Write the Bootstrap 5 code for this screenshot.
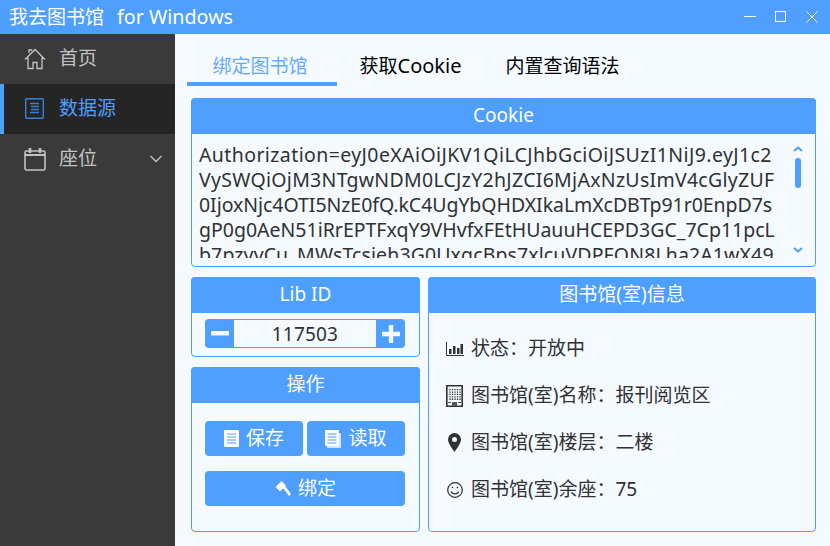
<!DOCTYPE html>
<html lang="zh-CN">
  <head>
    <meta charset="UTF-8" />
    <meta name="viewport" content="width=device-width, initial-scale=1.0" />
    <title>我去图书馆 for Windows</title>
    <link href="https://cdn.jsdelivr.net/npm/bootstrap@5.3.0/dist/css/bootstrap.min.css" rel="stylesheet" />
    <style>
      html, body { height: 100%; overflow: hidden; }
      body {
        background: #f5faff;
        color: #303133;
        font-family: "Noto Sans", "Noto Sans CJK SC", sans-serif;
        font-size: 19px;
      }
      .app-title {
        height: 34px;
        background: #4e9fff;
        color: #fff;
        padding-left: 9px;
        padding-right: 12px;
        line-height: 33px;
      }
      .app-title .win-btns { gap: 19px; }
      .title-en { font-size: 19.700px; margin-left: 13px; }
      .latin-big { font-size: 20px; }
      .app-body { height: 512px; }
      .side {
        width: 175px;
        background: #3a3a3a;
        color: #c3c3c3;
      }
      .side-item {
        height: 50px;
        padding-left: 24px;
        padding-bottom: 1px;
        gap: 13px;
        border-left: 0 solid #4e9fff;
      }
      .side-item.active-item {
        background: #252525;
        color: #4e9fff;
        border-left-width: 4px;
        padding-left: 21px;
        gap: 15px;
      }
      .side-item .chev { margin-left: auto; margin-right: 12px; }
      .main-pane { padding: 0 14px 14px 16px; min-width: 0; }
      .tabs-row { height: 64px; margin-left: -4px; padding-top: 14px; }
      .tab-item {
        height: 38px;
        line-height: 36px;
        padding: 0 21.500px 0 22.500px;
        color: #000;
        text-decoration: none;
        text-align: center;
      }
      .tab-item.on {
        min-width: 150px;
        padding-right: 25px;
        padding-left: 21px;
        color: #66abff;
        border-bottom: 4px solid #4e9fff;
      }
      .blue-card {
        background: #f5faff;
        border: 1px solid #4e9fff;
        border-radius: 4px;
        color: #303133;
      }
      .blue-card .card-header {
        height: 36px;
        line-height: 34px;
        padding: 0;
        margin: -1px -1px 0;
        background: #4e9fff;
        border: 0;
        border-radius: 4px 4px 0 0;
        color: #fff;
        text-align: center;
      }
      .cookie-box { height: 169px; }
      .cookie-text {
        height: 124px;
        overflow: hidden;
        padding: 8px 0 0 7px;
        line-height: 25px;
        white-space: nowrap;
        font-size: 19.500px;
        flex: 1;
        min-width: 0;
      }
      .ck-a { letter-spacing: .4px; }
      .ck-b { letter-spacing: .29px; }
      .ck-c { letter-spacing: -.05px; }
      .ck-d { letter-spacing: 0; }
      .ck-e { letter-spacing: .12px; }
      .fake-scroll {
        width: 34px;
        height: 131px;
        padding: 12px 0 12px;
        color: #4e9fff;
      }
      .fake-thumb {
        width: 6px;
        height: 30px;
        margin-top: 6px;
        background: #4e9fff;
        border-radius: 3px;
      }
      .lower-row { margin-top: 10px; gap: 8px; height: 255px; }
      .left-col { width: 229px; gap: 10px; }
      .lib-box { height: 80px; }
      .op-box { flex: 1; }
      .num-box { margin: 6px 14px 0 13px; height: 29px; }
      .num-box .btn {
        width: 29px;
        padding: 0;
        background: #4e9fff;
        border: 0;
        border-radius: 4px 0 0 4px;
      }
      .num-box .btn:last-child { border-radius: 0 4px 4px 0; }
      .num-box .form-control {
        height: 29px;
        padding: 0;
        background: #f5faff;
        border: 1px solid #4e9fff;
        border-width: 1px 0;
        border-radius: 0;
        color: #303133;
        font: inherit;
        letter-spacing: .2px;
        text-align: center;
        min-width: 0;
      }
      .op-body { padding: 18px 14px 0 13px; }
      .op-btn {
        height: 35px;
        padding: 0;
        background: #4e9fff;
        border: 0;
        border-radius: 4px;
        color: #fff;
        font-size: 19px;
        gap: 7px;
      }
      .op-half { width: 98px; }
      .op-wide { margin-top: 15px; }
      .info-body { padding-top: 12px; padding-left: 16px; }
      .info-line { height: 47px; gap: 7px; }
      .info-line .ico-slot { width: 19px; }
    </style>
  </head>
  <body>
    <div class="app-title d-flex align-items-center">
      <span>我去图书馆<span class="title-en">for Windows</span></span>
      <div class="win-btns d-flex align-items-center ms-auto">
        <svg width="12" height="12" viewBox="0 0 12 12"><path d="M0 5.500H12" stroke="#fff" /></svg>
        <svg width="12" height="12" viewBox="0 0 12 12"><rect x=".5" y=".5" width="10" height="10" fill="none" stroke="#fff" /></svg>
        <svg width="12" height="12" viewBox="0 0 12 12"><path d="M.5.5l11 11M11.500.5l-11 11" stroke="#fff" /></svg>
      </div>
    </div>

    <div class="app-body d-flex">
      <div class="side flex-shrink-0">
        <div class="side-item d-flex align-items-center">
          <svg width="22" height="22" viewBox="0 0 22 22" fill="none" stroke="currentColor" stroke-width="1.3"><path d="M1 11.500 11 1.500l10 10M4 9.500V20.500h5v-6h4v6h5V9.500M5 5V2h2.500v1" /></svg>
          <span>首页</span>
        </div>
        <div class="side-item active-item d-flex align-items-center">
          <svg width="19" height="21" viewBox="0 0 19 21" fill="none" stroke="#3a7fd0" stroke-width="1.400"><rect x=".7" y=".7" width="17.600" height="19.600" rx="1" /><path d="M5 5.500h9M6 8.500h8M6 11.500h8M5 14.500h9" stroke-width="1.600" /></svg>
          <span>数据源</span>
        </div>
        <div class="side-item d-flex align-items-center">
          <svg width="22" height="24" viewBox="0 0 22 24" fill="none" stroke="currentColor" stroke-width="1.600"><rect x="1" y="4" width="20" height="19" rx="1.500" /><path d="M1 8h20" stroke-width="2" /><path d="M6 1v5M16 1v5" stroke-width="2.600" /></svg>
          <span>座位</span>
          <svg class="chev" width="14" height="8" viewBox="0 0 14 8" fill="none" stroke="currentColor" stroke-width="1.400"><path d="M1.500 1 7 6.500 12.500 1" /></svg>
        </div>
      </div>

      <div class="main-pane flex-grow-1 d-flex flex-column">
        <div class="tabs-row d-flex">
          <a class="tab-item on" href="#">绑定图书馆</a>
          <a class="tab-item" href="#">获取<span class="latin-big">Cookie</span></a>
          <a class="tab-item" href="#">内置查询语法</a>
        </div>

        <div class="card blue-card cookie-box">
          <div class="card-header">Cookie</div>
          <div class="d-flex align-items-start">
            <div class="cookie-text">
              <div class="ck-a">Authorization=eyJ0eXAiOiJKV1QiLCJhbGciOiJSUzI1NiJ9.eyJ1c2</div>
              <div class="ck-b">VySWQiOjM3NTgwNDM0LCJzY2hJZCI6MjAxNzUsImV4cGlyZUF</div>
              <div class="ck-c">0IjoxNjc4OTI5NzE0fQ.kC4UgYbQHDXIkaLmXcDBTp91r0EnpD7s</div>
              <div class="ck-d">gP0g0AeN51iRrEPTFxqY9VHvfxFEtHUauuHCEPD3GC_7Cp11pcL</div>
              <div class="ck-e">b7pzyvCu_MWsTcsjeh3G0UxgcBps7xlcuVDPFON8Lha2A1wX49</div>
            </div>
            <div class="fake-scroll d-flex flex-column align-items-center flex-shrink-0">
              <svg width="10" height="6" viewBox="0 0 10 6" fill="none" stroke="currentColor" stroke-width="2"><path d="M1 5 5 1.500 9 5" /></svg>
              <div class="fake-thumb"></div>
              <svg class="mt-auto" width="10" height="6" viewBox="0 0 10 6" fill="none" stroke="currentColor" stroke-width="2"><path d="M1 1 5 4.500 9 1" /></svg>
            </div>
          </div>
        </div>

        <div class="lower-row d-flex">
          <div class="left-col d-flex flex-column flex-shrink-0">
            <div class="card blue-card lib-box">
              <div class="card-header">Lib ID</div>
              <div class="num-box d-flex">
                <button class="btn flex-shrink-0 d-flex align-items-center justify-content-center" type="button">
                  <svg width="18" height="5" viewBox="0 0 18 5"><rect width="18" height="4.500" rx=".6" fill="#f5faff" /></svg>
                </button>
                <input class="form-control" type="text" value="117503" />
                <button class="btn flex-shrink-0 d-flex align-items-center justify-content-center" type="button">
                  <svg width="18" height="18" viewBox="0 0 18 18"><path d="M6.800 0h4.400v6.800H18v4.400h-6.800V18H6.800v-6.800H0V6.800h6.800z" fill="#f5faff" /></svg>
                </button>
              </div>
            </div>
            <div class="card blue-card op-box">
              <div class="card-header">操作</div>
              <div class="op-body">
                <div class="d-flex justify-content-between">
                  <button class="btn op-btn op-half d-flex align-items-center justify-content-center" type="button">
                    <svg width="15" height="17" viewBox="0 0 15 17"><rect width="15" height="17" rx="1" fill="#fff" /><path d="M3 4h9M3 7h9M3 10h9M3 13h9" stroke="#4e9fff" /></svg>
                    <span>保存</span>
                  </button>
                  <button class="btn op-btn op-half d-flex align-items-center justify-content-center" type="button">
                    <svg width="16" height="18" viewBox="0 0 16 18"><rect x="2" y="3" width="14" height="15" rx="1" fill="#cfe3ff" /><rect width="14" height="16" rx="1" fill="#fff" /><path d="M2.500 4h9M2.500 7h9M2.500 10h9M2.500 13h9" stroke="#4e9fff" /></svg>
                    <span>读取</span>
                  </button>
                </div>
                <button class="btn op-btn op-wide w-100 d-flex align-items-center justify-content-center" type="button">
                  <svg width="17" height="16" viewBox="0 0 17 16"><path d="M7.500 0 12 4.500 6 10.500 1.500 6zM9 7l2-2 6 8-2 2z" fill="#fff" /></svg>
                  <span>绑定</span>
                </button>
              </div>
            </div>
          </div>

          <div class="card blue-card flex-grow-1">
            <div class="card-header">图书馆(室)信息</div>
            <div class="info-body">
              <div class="info-line d-flex align-items-center">
                <span class="ico-slot d-flex justify-content-center">
                  <svg width="18" height="14" viewBox="0 0 18 14"><path d="M.5 0v13.500H18" fill="none" stroke="#303133" /><path d="M3 7h2.500v5H3zM7 4h2.500v8H7zM11 6h2.500v6H11zM14.500 2H17v10h-2.500z" fill="#303133" /></svg>
                </span>
                <span>状态：开放中</span>
              </div>
              <div class="info-line d-flex align-items-center">
                <span class="ico-slot d-flex justify-content-center">
                  <svg width="17" height="22" viewBox="0 0 17 22"><path d="M.8.8h15.400v20.400H.8z" fill="none" stroke="#303133" stroke-width="1.600" /><path d="M4 4v11M6.500 4v11M9 4v11M11.500 4v11M14 4v11" stroke="#303133" stroke-width="1.300" stroke-dasharray="1.300 1.100" /><path d="M6 17h5v4H6zM2 17h3v1H2zM12 17h3v1h-3z" fill="#555" /></svg>
                </span>
                <span>图书馆(室)名称：报刊阅览区</span>
              </div>
              <div class="info-line d-flex align-items-center">
                <span class="ico-slot d-flex justify-content-center">
                  <svg width="13" height="19" viewBox="0 0 13 19"><path fill-rule="evenodd" d="M6.500 0A6.500 6.500 0 0 1 13 6.500c0 3.500-4 9-6.500 12.500C4 15.500 0 10 0 6.500A6.500 6.500 0 0 1 6.500 0zm0 4a2.500 2.500 0 1 0 0 5 2.500 2.500 0 0 0 0-5z" fill="#303133" /></svg>
                </span>
                <span>图书馆(室)楼层：二楼</span>
              </div>
              <div class="info-line d-flex align-items-center">
                <span class="ico-slot d-flex justify-content-center">
                  <svg width="16" height="16" viewBox="0 0 16 16" fill="none" stroke="#303133" stroke-width="1.200"><circle cx="8" cy="8" r="7.300" /><path d="M4.300 9.500c1.200 3.200 6.200 3.200 7.400 0" /><circle cx="5.500" cy="5.500" r=".8" fill="#303133" stroke="none" /><circle cx="10.500" cy="5.500" r=".8" fill="#303133" stroke="none" /></svg>
                </span>
                <span>图书馆(室)余座：75</span>
              </div>
            </div>
          </div>
        </div>
      </div>
    </div>
    <script src="https://cdn.jsdelivr.net/npm/bootstrap@5.3.0/dist/js/bootstrap.bundle.min.js"></script>
  </body>
</html>
